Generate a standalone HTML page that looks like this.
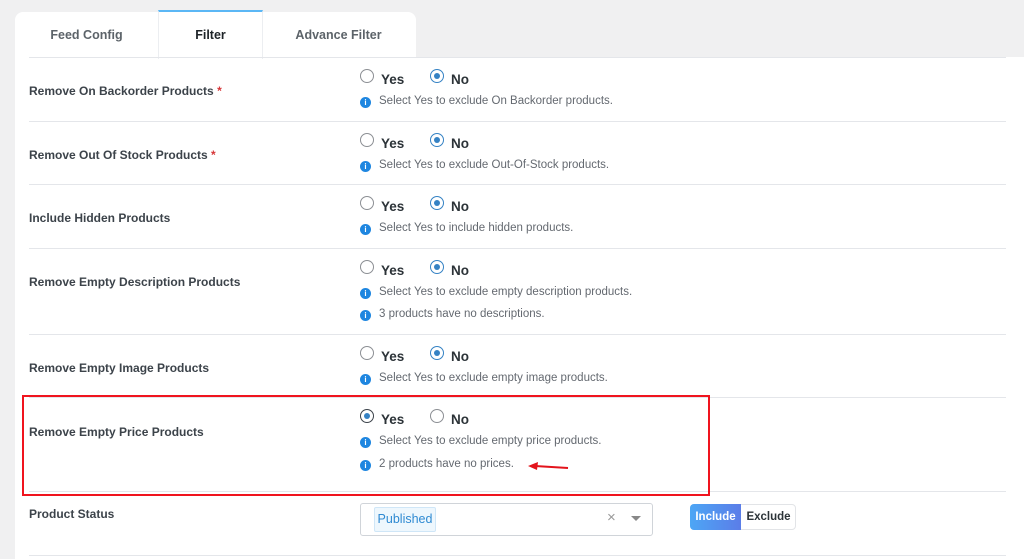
<!DOCTYPE html>
<html><head><style>
body{margin:0;width:1024px;height:559px;background:#f0f0f1;font-family:"Liberation Sans",sans-serif;position:relative;overflow:hidden}
.a{position:absolute;white-space:nowrap}
.card{position:absolute;left:15px;top:57px;width:1009px;height:502px;background:#fff}
.tabs{position:absolute;left:15px;top:12px;width:401px;height:46px;background:#fff;border-radius:8px 8px 0 0}
.tab{position:absolute;top:0;height:45px;line-height:46px;text-align:center;font-size:12.5px;font-weight:bold;color:#5c6369}
.line{position:absolute;left:29px;width:977px;height:1px;background:#e4e6ea}
.lbl{font-size:12px;font-weight:bold;color:#3c434a}
.r{width:14px;height:14px;border:1px solid #8c8f94;border-radius:50%;box-sizing:border-box;background:#fff}
.r.on{border-color:#3582c4}
.r.on::after{content:"";position:absolute;left:3px;top:3px;width:6px;height:6px;border-radius:50%;background:#3582c4}
.rt{font-size:13.5px;font-weight:bold;color:#2c3338}
.i{width:11px;height:11px;border-radius:50%;background:#1e86e0;color:#fff;font-size:8px;font-weight:bold;text-align:center;line-height:11px}
.it{font-size:11.5px;color:#646970}
.star{color:#d63638}
</style></head><body>
<div class="card"></div>
<div class="tabs">
<div class="tab" style="left:0;width:143px">Feed Config</div>
<div class="tab" style="left:143px;width:103px;color:#1d2327;border-left:1px solid #eceef1;border-right:1px solid #eceef1;border-top:2px solid #5bb7f5;top:-2px;height:47px">Filter</div>
<div class="tab" style="left:246px;width:155px">Advance Filter</div>
</div>
<div class="line" style="top:57px"></div>
<div class="line" style="top:121px"></div>
<div class="line" style="top:184px"></div>
<div class="line" style="top:248px"></div>
<div class="line" style="top:334px"></div>
<div class="line" style="top:397px"></div>
<div class="line" style="top:491px"></div>
<div class="line" style="top:555px"></div>

<div class="a lbl" style="left:29px;top:84px">Remove On Backorder Products <span class="star">*</span></div>
<div class="a lbl" style="left:29px;top:148px">Remove Out Of Stock Products <span class="star">*</span></div>
<div class="a lbl" style="left:29px;top:211px">Include Hidden Products</div>
<div class="a lbl" style="left:29px;top:275px">Remove Empty Description Products</div>
<div class="a lbl" style="left:29px;top:361px">Remove Empty Image Products</div>
<div class="a lbl" style="left:29px;top:425px">Remove Empty Price Products</div>
<div class="a lbl" style="left:29px;top:507px">Product Status</div>

<div class="a r" style="left:360px;top:69px"></div><div class="a rt" style="left:381px;top:72px">Yes</div>
<div class="a r on" style="left:430px;top:69px"></div><div class="a rt" style="left:451px;top:72px">No</div>
<div class="a r" style="left:360px;top:133px"></div><div class="a rt" style="left:381px;top:136px">Yes</div>
<div class="a r on" style="left:430px;top:133px"></div><div class="a rt" style="left:451px;top:136px">No</div>
<div class="a r" style="left:360px;top:196px"></div><div class="a rt" style="left:381px;top:199px">Yes</div>
<div class="a r on" style="left:430px;top:196px"></div><div class="a rt" style="left:451px;top:199px">No</div>
<div class="a r" style="left:360px;top:260px"></div><div class="a rt" style="left:381px;top:263px">Yes</div>
<div class="a r on" style="left:430px;top:260px"></div><div class="a rt" style="left:451px;top:263px">No</div>
<div class="a r" style="left:360px;top:346px"></div><div class="a rt" style="left:381px;top:349px">Yes</div>
<div class="a r on" style="left:430px;top:346px"></div><div class="a rt" style="left:451px;top:349px">No</div>
<div class="a r on" style="left:360px;top:409px;border-color:#3c434a"></div><div class="a rt" style="left:381px;top:412px">Yes</div>
<div class="a r" style="left:430px;top:409px"></div><div class="a rt" style="left:451px;top:412px">No</div>

<div class="a i" style="left:360px;top:97px">i</div><div class="a it" style="left:379px;top:95px">Select Yes to exclude On Backorder products.</div>
<div class="a i" style="left:360px;top:161px">i</div><div class="a it" style="left:379px;top:159px">Select Yes to exclude Out-Of-Stock products.</div>
<div class="a i" style="left:360px;top:224px">i</div><div class="a it" style="left:379px;top:222px">Select Yes to include hidden products.</div>
<div class="a i" style="left:360px;top:288px">i</div><div class="a it" style="left:379px;top:286px">Select Yes to exclude empty description products.</div>
<div class="a i" style="left:360px;top:310px">i</div><div class="a it" style="left:379px;top:308px">3 products have no descriptions.</div>
<div class="a i" style="left:360px;top:374px">i</div><div class="a it" style="left:379px;top:372px">Select Yes to exclude empty image products.</div>
<div class="a i" style="left:360px;top:437px">i</div><div class="a it" style="left:379px;top:435px">Select Yes to exclude empty price products.</div>
<div class="a i" style="left:360px;top:460px">i</div><div class="a it" style="left:379px;top:458px">2 products have no prices.</div>

<div class="a" style="left:22px;top:395px;width:684px;height:97px;border:2px solid #f0141e"></div>
<svg class="a" style="left:525px;top:460px" width="45" height="14"><path d="M43 8 L10 6" stroke="#e3141c" stroke-width="2"/><path d="M3 6 L13 2 L12 10 Z" fill="#e3141c"/></svg>

<div class="a" style="left:360px;top:503px;width:293px;height:33px;border:1px solid #d0d4d9;border-radius:3px;box-sizing:border-box"></div>
<div class="a" style="left:374px;top:507px;width:62px;height:25px;background:#eef7fd;border:1px solid #cfe6f7;box-sizing:border-box;border-radius:2px;color:#2f8ad2;font-size:12.5px;line-height:23px;text-align:center">Published</div>
<div class="a" style="left:607px;top:509px;font-size:15px;color:#999">×</div>
<div class="a" style="left:631px;top:516px;width:0;height:0;border-left:5px solid transparent;border-right:5px solid transparent;border-top:5px solid #888"></div>

<div class="a" style="left:690px;top:504px;width:106px;height:26px;border:1px solid #e2e4e7;border-radius:4px;box-sizing:border-box;background:#fff"></div>
<div class="a" style="left:690px;top:504px;width:51px;height:26px;border-radius:4px 0 0 4px;background:linear-gradient(90deg,#4da6f5,#5b7de8);color:#fff;font-size:11.5px;font-weight:bold;line-height:26px;text-align:center">Include</div>
<div class="a" style="left:741px;top:504px;width:55px;height:26px;color:#2c3338;font-size:11.5px;font-weight:bold;line-height:26px;text-align:center">Exclude</div>
</body></html>
